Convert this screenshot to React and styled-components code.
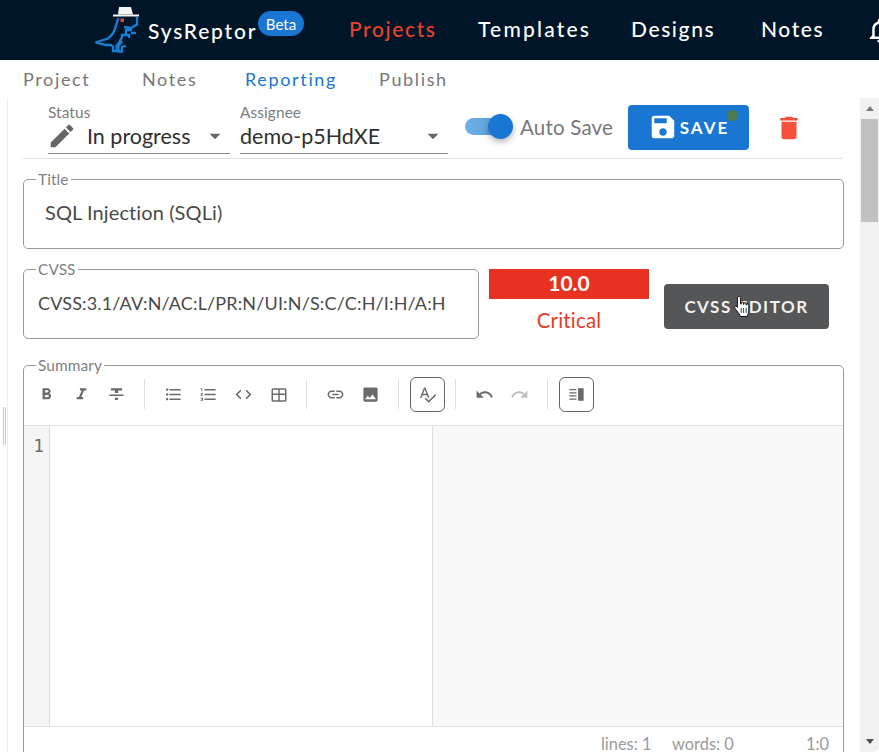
import React from "react";
import styled, { createGlobalStyle } from "styled-components";
import {
  MdEdit, MdSave, MdDelete, MdFormatBold, MdFormatItalic, MdFormatStrikethrough,
  MdFormatListBulleted, MdFormatListNumbered, MdCode, MdLink, MdImage, MdSpellcheck,
  MdUndo, MdRedo, MdOutlineNotifications, MdArrowDropDown,
} from "react-icons/md";

const FONT = `"Lato", "Open Sans", sans-serif`;

const Global = createGlobalStyle`
  html, body { margin: 0; padding: 0; background: #fff; overflow: hidden; }
  * { box-sizing: border-box; }
  body { font-family: ${FONT}; }
`;

const Page = styled.div`
  width: 879px; height: 752px; overflow: hidden; display: flex; flex-direction: column;
`;
const Header = styled.header`
  height: 60px; flex: none; background: #001528; display: flex; align-items: center;
  padding-left: 95px; overflow: hidden; white-space: nowrap;
`;
const BrandName = styled.span`
  color: #fff; font-size: 21px; letter-spacing: 1.8px; margin-left: 7px; width: 110px; flex: none;
  font-weight: 500;
`;
const Beta = styled.span`
  align-self: flex-start; margin-top: 11px; height: 25px; width: 46px; flex: none; border-radius: 13px;
  background: #1976d2; color: #fff; font-size: 15px; display: flex; align-items: center; justify-content: center;
`;
const Nav = styled.nav`
  display: flex; margin-left: 45px; flex: none;
`;
const NavLink = styled.span`
  color: ${p => (p.$active ? "#e8432a" : "#fff")};
  font-size: 21px; font-weight: 500; letter-spacing: ${p => p.$ls || 1.6}px; width: ${p => p.$w}px; flex: none;
`;
const Bell = styled.span`
  color: #fff; font-size: 29px; display: flex; flex: none;
`;
const Tabs = styled.div`
  height: 38px; flex: none; display: flex; align-items: center; padding: 0 0 0 23px; background: #fff;
`;
const Tab = styled.span`
  color: ${p => (p.$active ? "#1976d2" : "#77777a")};
  font-size: 18px; letter-spacing: 1.65px; width: ${p => p.$w}px; flex: none; margin-bottom: 1px;
`;
const Body = styled.div`
  flex: 1; min-height: 0; display: flex;
`;
const SideHandle = styled.div`
  width: 8px; flex: none; border-right: 1px solid #eee; display: flex; align-items: center;
  justify-content: flex-start; padding-left: 3px;
`;
const Grip = styled.div`
  width: 3px; height: 38px; border-left: 1px solid #ccc; border-right: 1px solid #ccc; margin-top: 1px;
`;
const Main = styled.main`
  flex: 1; min-width: 0; padding: 0 16px 0 15px; overflow: hidden;
`;
const Toolbar = styled.div`
  height: 61px; border-bottom: 1px solid #e0e0e0; display: flex; align-items: center; padding-left: 25px; width: 820px;
`;
const SelectBox = styled.div`
  width: ${p => p.$w}px; height: 51px; margin: 0 ${p => p.$mr}px 0 0; border-bottom: 1px solid #8a8a8a;
  display: flex; flex-direction: column; flex: none; padding-top: 1px;
`;
const SelectLabel = styled.label`
  font-size: 15.4px; line-height: 16px; color: #7c7c7c; letter-spacing: .1px; margin-bottom: 1px;
`;
const SelectRow = styled.div`
  display: flex; align-items: center; height: 30px; color: #303030; font-size: 21.5px;
`;
const PencilWrap = styled.span`
  display: flex; color: #666; font-size: 30px; margin: 0 10px 0 -1px; flex: none;
`;
const SelectValue = styled.span`
  flex: 1; overflow: hidden; white-space: nowrap;
`;
const Caret = styled.span`
  display: flex; color: #666; font-size: 26px; flex: none; margin-right: 2px; margin-left: ${p => p.$ml || 0}px;
`;
const ToggleWrap = styled.div`
  display: flex; align-items: center; margin-left: 17px; flex: none; margin-bottom: 3px;
`;
const Track = styled.div`
  width: 45px; height: 17px; border-radius: 9px; position: relative;
  background: linear-gradient(90deg, #6eb0e6, #5c9bd9);
`;
const Thumb = styled.div`
  position: absolute; width: 25px; height: 25px; border-radius: 50%; left: 23px; top: -4px;
  background: #1976d2; box-shadow: 0 3px 6px rgba(0,0,0,.3);
`;
const ToggleLabel = styled.span`
  margin-left: 10px; font-size: 20.5px; color: #77777a; width: 108px; letter-spacing: .2px; white-space: nowrap;
`;
const SaveButton = styled.button`
  width: 121px; height: 45px; flex: none; border: 0; border-radius: 4px; background: #1976d2; color: #fff;
  display: flex; align-items: center; justify-content: center; gap: 2px; font: 700 17px ${FONT}; letter-spacing: 2px;
  position: relative; margin-bottom: 2px; padding: 0;
  svg { font-size: 30px; }
`;
const Dot = styled.span`
  position: absolute; width: 11px; height: 11px; border-radius: 50%; background: #4c7c4e; right: 11px; top: 5px;
`;
const TrashButton = styled.span`
  display: flex; margin-left: 25px; font-size: 30px; color: #f4513d;
`;
const Field = styled.fieldset`
  margin: ${p => p.$mt}px 0 0; padding: 0; border: 1px solid #9a9a9a; border-radius: 5px; min-width: 0;
  width: ${p => (p.$w ? `${p.$w}px` : "100%")}; height: ${p => p.$h}px; flex: none;
`;
const Legend = styled.legend`
  font-size: 15.4px; line-height: 14px; color: #808080; margin-left: 12px; padding: 1px 2px; letter-spacing: .1px;
`;
const TitleText = styled.div`
  font-size: 20px; color: #4a4a4a; padding: 13px 0 0 21px; letter-spacing: .1px;
`;
const CvssRow = styled.div`
  display: flex; margin-top: 12px; align-items: flex-start;
`;
const CvssText = styled.div`
  font-size: 18px; color: #4a4a4a; padding: 15px 0 0 14px; white-space: nowrap; letter-spacing: .15px;
`;
const ScoreColumn = styled.div`
  width: 160px; margin: 8px 0 0 10px; flex: none; display: flex; flex-direction: column; align-items: center;
`;
const ScoreBar = styled.div`
  width: 100%; height: 30px; background: #e83221; color: #fff; font-size: 21px; font-weight: 700; padding-bottom: 3px;
  display: flex; align-items: center; justify-content: center;
`;
const ScoreLabel = styled.div`
  color: #e83b26; font-size: 20.5px; margin-top: 9px; letter-spacing: .2px;
`;
const EditorButton = styled.button`
  width: 165px; height: 45px; flex: none; margin: 23px 0 0 15px; border: 0; border-radius: 4px;
  background: #555658; color: #f0f0f0; font: 700 17px ${FONT}; letter-spacing: 1.5px; position: relative; white-space: nowrap;
`;
const HandCursor = styled.svg`
  position: absolute; left: 69px; top: 11px; width: 19px; height: 24px;
`;
const EditorField = styled(Field)`
  margin-top: 18px;
`;
const EditorBar = styled.div`
  height: 53px; padding: 0 0 0 5px; display: flex; align-items: flex-start; border-bottom: 1px solid #e0e0e0;
`;
const ToolButton = styled.span`
  width: 35px; height: 35px; flex: none; display: flex; align-items: center; justify-content: center;
  color: ${p => (p.$off ? "#c0c0c0" : "#6a6a6a")}; font-size: 19px; margin-top: 4px;
  border: ${p => (p.$boxed ? "1px solid #666" : "0")}; border-radius: 6px;
`;
const Separator = styled.span`
  width: 1px; height: 30px; flex: none; background: #ddd; margin: 6px ${p => p.$r || 10}px 0 10px;
`;
const EditorPanes = styled.div`
  height: 300px; display: flex;
`;
const Gutter = styled.div`
  width: 26px; flex: none; background: #f5f5f5; border-right: 1px solid #ddd; color: #6f6f6f;
  font: 18px "DejaVu Sans Mono", monospace; text-align: right; padding: 9px 5px 0 0;
`;
const SourcePane = styled.div`
  width: 383px; flex: none; border-right: 1px solid #ddd; background: #fff;
`;
const PreviewPane = styled.div`
  flex: 1; background: #f9f9f9;
`;
const StatusBar = styled.div`
  border-top: 1px solid #e0e0e0; height: 40px; display: flex; color: #9a9a9a; font-size: 16.4px; padding-top: 7px; justify-content: flex-end;
`;
const StatusItem = styled.span`
  width: ${p => p.$w}px; flex: none; white-space: nowrap;
`;
const Scrollbar = styled.div`
  width: 19px; flex: none; background: #f1f1f1; display: flex; flex-direction: column; align-items: center;
  border-bottom-right-radius: 6px;
`;
const ArrowUp = styled.div`
  height: 21px; flex: none; display: flex; align-items: center; justify-content: center; width: 100%;
  &::before { content: ""; border: 4.5px solid transparent; border-top: 0; border-bottom: 5px solid #7a7a7a; }
`;
const ScrollThumb = styled.div`
  width: 17px; height: 103px; background: #c1c1c1; flex: none;
`;
const ScrollSpace = styled.div`flex: 1;`;
const ArrowDown = styled.div`
  height: 21px; flex: none; display: flex; align-items: center; justify-content: center; width: 100%;
  &::before { content: ""; border: 4.5px solid transparent; border-bottom: 0; border-top: 5px solid #505050; }
`;
const LogoMark = styled.svg`
  width: 46px; height: 48px; flex: none;
`;

const Logo = () => (
  <LogoMark viewBox="95 7 46 48">
    <path d="M95.5 43.5 L108 39.5 Q115 34 116 26 L118.5 19" fill="none" stroke="#1680d6" strokeWidth="2.3" />
    <path d="M95.5 43.5 L106 46 L111 46 L113 47.5 L113 52 L117 52 L116.5 47 Q120 43 122 38 L122 36 L129 36 L129 39" fill="none" stroke="#1680d6" strokeWidth="2.3" />
    <path d="M122 42 L118.5 47 L118.5 52.5 L122 52.5 L122 48 L126 47" fill="none" stroke="#1680d6" strokeWidth="2.3" />
    <path d="M124 28 L131 29 L137 25.5 L137 18 M132 31 L126 31 L126 36 M131 34 L136 34" fill="none" stroke="#1680d6" strokeWidth="2.3" />
    <path d="M118 15.5 L119 8 L131 8 L133 15.5 Z" fill="#f4f4f4" />
    <rect x="113" y="15.5" width="26" height="2" fill="#f4f4f4" />
    <rect x="120.5" y="19.5" width="3.5" height="3.5" fill="#e8432a" />
  </LogoMark>
);

const TableIcon = () => (
  <svg width="18" height="18" viewBox="0 0 24 24" fill="currentColor">
    <path d="M4 3h16a2 2 0 0 1 2 2v14a2 2 0 0 1-2 2H4a2 2 0 0 1-2-2V5a2 2 0 0 1 2-2zm0 2v5h7V5H4zm9 0v5h7V5h-7zm-9 7v7h7v-7H4zm9 0v7h7v-7h-7z" />
  </svg>
);
const SplitIcon = () => (
  <svg width="19" height="19" viewBox="0 0 24 24" fill="currentColor">
    <path d="M3 5h9v1.6H3zm0 4h9v1.6H3zm0 4h9v1.6H3zm0 4h9v1.6H3zM14 4h7v16h-7z" />
  </svg>
);

export default function App() {
  return (
    <Page>
      <Global />
      <Header>
        <Logo />
        <BrandName>SysReptor</BrandName>
        <Beta>Beta</Beta>
        <Nav>
          <NavLink $active $w={129}>Projects</NavLink>
          <NavLink $ls={2.2} $w={153}>Templates</NavLink>
          <NavLink $w={130}>Designs</NavLink>
          <NavLink $w={104}>Notes</NavLink>
          <Bell><MdOutlineNotifications /></Bell>
        </Nav>
      </Header>
      <Tabs>
        <Tab $w={119}>Project</Tab>
        <Tab $w={103}>Notes</Tab>
        <Tab $active $w={134}>Reporting</Tab>
        <Tab $w={80}>Publish</Tab>
      </Tabs>
      <Body>
        <SideHandle><Grip /></SideHandle>
        <Main>
          <Toolbar>
            <SelectBox $w={182} $mr={10}>
              <SelectLabel>Status</SelectLabel>
              <SelectRow>
                <PencilWrap><MdEdit /></PencilWrap>
                <SelectValue>In progress</SelectValue>
                <Caret><MdArrowDropDown /></Caret>
              </SelectRow>
            </SelectBox>
            <SelectBox $w={208} $mr={0}>
              <SelectLabel>Assignee</SelectLabel>
              <SelectRow>
                <SelectValue>demo-p5HdXE5</SelectValue>
                <Caret $ml={38}><MdArrowDropDown /></Caret>
              </SelectRow>
            </SelectBox>
            <ToggleWrap>
              <Track><Thumb /></Track>
              <ToggleLabel>Auto Save</ToggleLabel>
            </ToggleWrap>
            <SaveButton><MdSave />SAVE<Dot /></SaveButton>
            <TrashButton><MdDelete /></TrashButton>
          </Toolbar>
          <Field $mt={12} $h={78}>
            <Legend>Title</Legend>
            <TitleText>SQL Injection (SQLi)</TitleText>
          </Field>
          <CvssRow>
            <Field $mt={0} $w={456} $h={78}>
              <Legend>CVSS</Legend>
              <CvssText>CVSS:3.1/AV:N/AC:L/PR:N/UI:N/S:C/C:H/I:H/A:H</CvssText>
            </Field>
            <ScoreColumn>
              <ScoreBar>10.0</ScoreBar>
              <ScoreLabel>Critical</ScoreLabel>
            </ScoreColumn>
            <EditorButton>
              CVSS EDITOR
              <HandCursor viewBox="0 0 19 24">
                <path d="M6 1.5c1 0 1.6.7 1.6 1.6V9l.6.1V8c0-1.6 2.2-1.6 2.2 0v1.3l.5.1V8.7c0-1.5 2.2-1.5 2.2 0v1.2l.5.1c0-1.4 2.2-1.4 2.2.1v5c0 3-1 4-1.3 6.4H7.4c-.5-2-2-3.4-3.6-5.7L1.7 13c-.8-1.3 1-2.6 2-1.5l.7.9V3.1c0-.9.7-1.6 1.6-1.6z" fill="#fff" stroke="#111" strokeWidth="1" />
                <path d="M8.2 13v5M10.6 13v5M13.2 13v5" stroke="#111" strokeWidth=".8" />
              </HandCursor>
            </EditorButton>
          </CvssRow>
          <EditorField $mt={18} $h={421}>
            <Legend>Summary</Legend>
            <EditorBar>
              <ToolButton><MdFormatBold /></ToolButton>
              <ToolButton><MdFormatItalic /></ToolButton>
              <ToolButton><MdFormatStrikethrough /></ToolButton>
              <Separator $r={11} />
              <ToolButton><MdFormatListBulleted /></ToolButton>
              <ToolButton><MdFormatListNumbered /></ToolButton>
              <ToolButton><MdCode /></ToolButton>
              <ToolButton><TableIcon /></ToolButton>
              <Separator $r={11} />
              <ToolButton><MdLink /></ToolButton>
              <ToolButton><MdImage /></ToolButton>
              <Separator $r={11} />
              <ToolButton $boxed><MdSpellcheck /></ToolButton>
              <Separator $r={11} />
              <ToolButton><MdUndo /></ToolButton>
              <ToolButton $off><MdRedo /></ToolButton>
              <Separator $r={11} />
              <ToolButton $boxed><SplitIcon /></ToolButton>
            </EditorBar>
            <EditorPanes>
              <Gutter>1</Gutter>
              <SourcePane />
              <PreviewPane />
            </EditorPanes>
            <StatusBar>
              <StatusItem $w={71}>lines: 1</StatusItem>
              <StatusItem $w={134}>words: 0</StatusItem>
              <StatusItem $w={37}>1:0</StatusItem>
            </StatusBar>
          </EditorField>
        </Main>
        <Scrollbar>
          <ArrowUp />
          <ScrollThumb />
          <ScrollSpace />
          <ArrowDown />
        </Scrollbar>
      </Body>
    </Page>
  );
}
